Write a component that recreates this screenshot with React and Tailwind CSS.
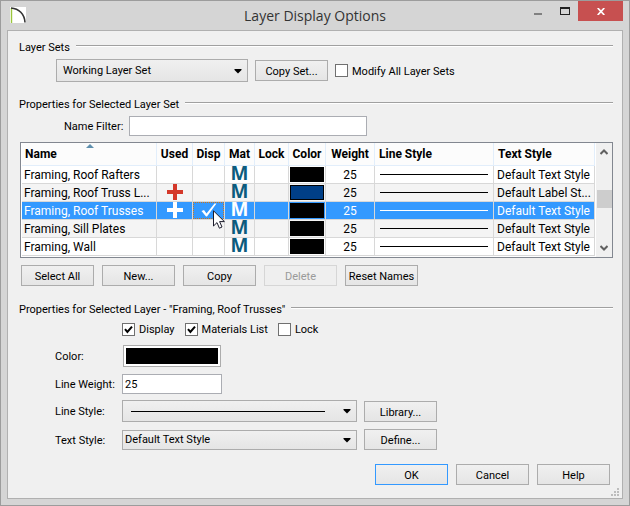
import React from 'react';

const layers = [
  { name: 'Framing, Roof Rafters', color: '#000000', textStyle: 'Default Text Style' },
  { name: 'Framing, Roof Truss L...', used: true, color: '#003f87', textStyle: 'Default Label St...' },
  { name: 'Framing, Roof Trusses', used: true, disp: true, selected: true, color: '#000000', textStyle: 'Default Text Style' },
  { name: 'Framing, Sill Plates', color: '#000000', textStyle: 'Default Text Style' },
  { name: 'Framing, Wall', color: '#000000', textStyle: 'Default Text Style' },
];

const Button = ({ children, primary, disabled }) => (
  <button
    type="button"
    disabled={disabled}
    className={`h-[21px] w-[73px] shrink-0 border pt-0.5 text-center leading-[17px] whitespace-nowrap ${
      disabled
        ? 'border-[#d6d6d6] bg-[#efefef] text-[#9a9a9a]'
        : primary
          ? 'border-[#3399ff] bg-linear-to-b from-[#f0f0f0] to-[#e5e5e5]'
          : 'border-[#acacac] bg-linear-to-b from-[#f0f0f0] to-[#e5e5e5]'
    }`}
  >
    {children}
  </button>
);

const Check = ({ label, defaultChecked }) => (
  <label className="flex items-center gap-1 whitespace-nowrap">
    <span className="relative block h-[13px] w-[13px]">
      <input
        type="checkbox"
        defaultChecked={defaultChecked}
        className="peer block h-[13px] w-[13px] appearance-none border border-[#707070] bg-white"
      />
      <svg viewBox="0 0 13 13" className="pointer-events-none absolute inset-0 hidden h-[13px] w-[13px] peer-checked:block">
        <path d="M3 6.2 L5.4 9 L10 3.6" fill="none" stroke="#000" strokeWidth="2" />
      </svg>
    </span>
    <span className="pt-0.5">{label}</span>
  </label>
);

const Heading = ({ children }) => (
  <div className="flex h-4 items-center gap-1.5">
    <h2 className="pt-0.5 whitespace-nowrap">{children}</h2>
    <div className="mb-0.5 h-0.5 flex-1 border-t border-[#a0a0a0] bg-white" />
  </div>
);

const Select = ({ id, label, value, className, children }) => (
  <div className={`relative ${className}`}>
    <select
      id={id}
      aria-label={label}
      className="block h-full w-full appearance-none border border-[#acacac] bg-linear-to-b from-[#f0f0f0] to-[#e5e5e5] pt-px"
    >
      <option>{value}</option>
    </select>
    {children}
    <svg viewBox="0 0 8 5" className="pointer-events-none absolute top-1/2 right-1.5 -mt-0.5 h-[5px] w-2">
      <path d="M0.5 0 H7.5 V1 L4 4.5 L0.5 1 Z" fill="#000" />
    </svg>
  </div>
);

const Th = ({ children, className }) => (
  <th className={`relative h-[23px] border-r border-b border-[#e2eefb] bg-[#fcfcfc] p-0 leading-[22px] font-bold ${className}`}>
    {children}
  </th>
);

const LayerRow = ({ layer, striped }) => {
  const cell = 'h-[18px] border-r border-b border-[#d8d8d8] p-0 align-top whitespace-nowrap';
  const text = `${cell} pt-px leading-4`;
  const icon = layer.selected ? 'text-white' : 'text-[#0b5b7d]';
  return (
    <tr className={layer.selected ? 'bg-[#3399ff] text-white' : striped ? 'bg-[#f4f4f4]' : 'bg-white'}>
      <td className={`${text} pl-0.5`}>{layer.name}</td>
      <td className={cell}>
        {layer.used && (
          <svg viewBox="0 0 16 16" className={`mx-auto block h-4 w-4 ${layer.selected ? 'text-white' : 'text-[#d4382a]'}`}>
            <path d="M6 0 H10 V6 H16 V10 H10 V16 H6 V10 H0 V6 H6 Z" fill="currentColor" />
          </svg>
        )}
      </td>
      <td className={`${cell} relative`}>
        {layer.disp && (
          <>
            <div className="h-[17px] border border-dotted border-[#c8741e]">
              <svg viewBox="0 0 16 14" className="mx-auto block h-[14px] w-4">
                <path d="M0.5 8 L3 7 L5.5 10.5 L13.5 0.5 H15.5 L6 13.5 H5 Z" fill="#fff" />
              </svg>
            </div>
            <svg viewBox="0 0 12 19" className="pointer-events-none absolute top-2 left-5 z-10 h-[19px] w-3">
              <path d="M0.5 0.8 V16 L4 12.6 L6.4 18.2 L9 17 L6.6 11.6 H11.4 Z" fill="#fff" stroke="#1b1b2b" strokeWidth="1" />
            </svg>
          </>
        )}
      </td>
      <td className={`${cell} text-center`}>
        <span className={`flex h-[17px] items-center justify-center pb-0.5 font-['Open_Sans',sans-serif] text-[19px] leading-[15px] font-bold ${icon}`}>M</span>
      </td>
      <td className={cell} />
      <td className={cell}>
        <div className="mx-px mt-px h-[15px] border border-black" style={{ backgroundColor: layer.color }} />
      </td>
      <td className={`${text} text-center`}>25</td>
      <td className={`${cell} px-[5px]`}>
        <div className={`mt-2 h-px ${layer.selected ? 'bg-white' : 'bg-black'}`} />
      </td>
      <td className={`${text} pl-[3px]`}>{layer.textStyle}</td>
    </tr>
  );
};

const App = () => {
  return (
    <div className="flex min-h-screen flex-col border border-[#9c9c9c] bg-[#d5d5d5] px-1.5 pb-1.5 font-[Roboto,sans-serif] text-[11px] leading-4 text-black">
      {/* Title bar */}
      <header className="relative flex h-[29px] items-start justify-between">
        <svg viewBox="0 0 16 16" className="mt-1.5 ml-[3px] h-4 w-4">
          <rect width="16" height="16" fill="#fff" />
          <path d="M1.5 1 V16" stroke="#9bc53d" strokeWidth="1.4" />
          <path d="M1 1 C9 1.5 14.5 7 15 15.5" fill="none" stroke="#333" strokeWidth="1.6" />
        </svg>
        <h1 className="absolute inset-x-0 top-1 text-center font-['Open_Sans',sans-serif] text-sm leading-[22px] text-[#333]">
          Layer Display Options
        </h1>
        <div className="relative flex">
          <button type="button" aria-label="Minimize" className="flex h-5 w-[27px] items-center justify-center">
            <span className="mt-1.5 h-0.5 w-2 bg-[#808080]" />
          </button>
          <button type="button" aria-label="Maximize" className="flex h-5 w-[27px] items-center justify-center">
            <span className="h-2 w-[10px] border border-t-2 border-[#222]" />
          </button>
          <button type="button" aria-label="Close" className="flex h-5 w-[45px] items-center justify-center bg-[#c75050]">
            <svg viewBox="0 0 8 7" className="h-[7px] w-2">
              <path d="M0.7 0 L7.3 7 M7.3 0 L0.7 7" stroke="#fff" strokeWidth="1.7" />
            </svg>
          </button>
        </div>
      </header>

      <main className="relative flex-1 border border-[#b0b0b0] bg-[#f0f0f0] pt-2 pr-[9px] pl-[11px]">
        {/* Layer sets */}
        <Heading>Layer Sets</Heading>
        <div className="mt-1 ml-[37px] flex items-center gap-[7px]">
          <Select label="Layer set" value="Working Layer Set" className="h-[23px] w-48 [&>select]:pl-1.5" />
          <Button>Copy Set...</Button>
          <Check label="Modify All Layer Sets" />
        </div>

        {/* Layer table */}
        <div className="mt-[14px]">
          <Heading>Properties for Selected Layer Set</Heading>
        </div>
        <div className="mt-1 ml-[45px] flex items-center gap-[7px]">
          <label htmlFor="filter" className="w-[58px] pt-0.5 whitespace-nowrap">Name Filter:</label>
          <input id="filter" type="text" className="h-5 w-[238px] border border-[#abadb3] bg-white px-1" />
        </div>

        <div className="mt-1.5 ml-px flex h-[116px] overflow-hidden border border-[#828790] bg-white pl-px text-xs">
          <table className="h-min min-w-0 flex-1 table-fixed border-separate border-spacing-0">
            <colgroup>
              <col className="w-[135px]" />
              <col className="w-9" />
              <col className="w-8" />
              <col className="w-[30px]" />
              <col className="w-[34px]" />
              <col className="w-[37px]" />
              <col className="w-[49px]" />
              <col />
              <col className="w-[101px]" />
            </colgroup>
            <thead>
              <tr>
                <Th className="pl-[3px] text-left">
                  Name
                  <svg viewBox="0 0 8 4" className="absolute top-px left-16 h-1 w-2">
                    <path d="M4 0 L8 4 H0 Z" fill="#5f8fae" />
                  </svg>
                </Th>
                <Th className="text-center">Used</Th>
                <Th className="text-center">Disp</Th>
                <Th className="text-center">Mat</Th>
                <Th className="text-center">Lock</Th>
                <Th className="text-center">Color</Th>
                <Th className="text-center">Weight</Th>
                <Th className="pl-1 text-left">Line Style</Th>
                <Th className="pl-1 text-left">Text Style</Th>
              </tr>
            </thead>
            <tbody>
              {layers.map((layer, i) => (
                <LayerRow key={layer.name} layer={layer} striped={i % 2 === 1} />
              ))}
            </tbody>
          </table>
          <div className="ml-px flex w-4 flex-col items-center bg-[#f0f0f0]">
            <svg viewBox="0 0 8 6" className="mt-1.5 h-1.5 w-2">
              <path d="M0.5 5 L4 1.5 L7.5 5" fill="none" stroke="#606060" strokeWidth="2" />
            </svg>
            <div className="mt-[35px] h-[18px] w-[15px] bg-[#cdcdcd]" />
            <svg viewBox="0 0 8 6" className="mt-auto mb-1.5 h-1.5 w-2">
              <path d="M0.5 1 L4 4.5 L7.5 1" fill="none" stroke="#606060" strokeWidth="2" />
            </svg>
          </div>
        </div>

        <div className="mt-[7px] ml-0.5 flex gap-2">
          <Button>Select All</Button>
          <Button>New...</Button>
          <Button>Copy</Button>
          <Button disabled>Delete</Button>
          <Button>Reset Names</Button>
        </div>

        {/* Selected layer */}
        <div className="mt-[15px]">
          <Heading>Properties for Selected Layer - "Framing, Roof Trusses"</Heading>
        </div>
        <div className="mt-1 ml-[103px] flex h-4 gap-2.5">
          <Check label="Display" defaultChecked />
          <Check label="Materials List" defaultChecked />
          <Check label="Lock" />
        </div>

        <div className="mt-2 ml-9 grid grid-cols-[67px_235px_73px] items-center gap-y-[7px]">
          <label htmlFor="color" className="pt-0.5">Color:</label>
          <button id="color" type="button" className="ml-px h-[22px] w-[98px] border border-[#acacac] bg-white p-0.5">
            <span className="block h-full bg-black" />
          </button>
          <span />
          <label htmlFor="weight" className="pt-0.5 whitespace-nowrap">Line Weight:</label>
          <input id="weight" type="text" defaultValue="25" className="h-5 w-[100px] border border-[#abadb3] bg-white px-0.5 pt-px" />
        </div>
        <div className="mt-1.5 ml-9 grid grid-cols-[67px_235px_73px] items-center gap-y-[7px]">
          <label htmlFor="lineStyle" className="pt-0.5">Line Style:</label>
          <Select id="lineStyle" value="" className="h-[22px]">
            <div className="pointer-events-none absolute top-1/2 right-8 left-[9px] h-px bg-black" />
          </Select>
          <div className="ml-[7px]"><Button>Library...</Button></div>
          <label htmlFor="textStyle" className="pt-0.5">Text Style:</label>
          <Select id="textStyle" value="Default Text Style" className="h-5 [&>select]:pl-0.5" />
          <div className="ml-[7px]"><Button>Define...</Button></div>
        </div>

        <div className="mt-[14px] mr-[3px] mb-3 flex justify-end gap-2">
          <Button primary>OK</Button>
          <Button>Cancel</Button>
          <Button>Help</Button>
        </div>

        <svg viewBox="0 0 8 8" className="absolute right-[3px] bottom-0.5 h-2 w-2" fill="#bdbdbd">
          <path d="M6 0h2v2h-2z M3 3h2v2h-2z M6 3h2v2h-2z M0 6h2v2h-2z M3 6h2v2h-2z M6 6h2v2h-2z" />
        </svg>
      </main>
    </div>
  );
};

export default App;
